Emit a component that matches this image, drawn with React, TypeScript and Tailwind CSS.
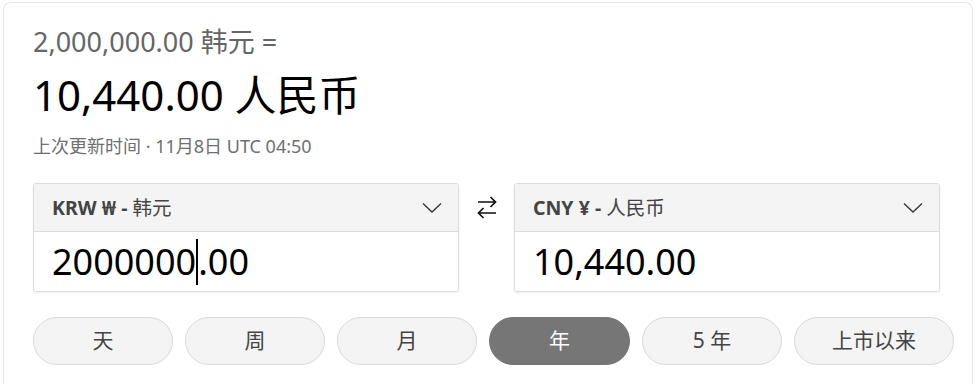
import React from "react";

const font = { fontFamily: '"Segoe UI", "Noto Sans", "Noto Sans CJK SC", sans-serif' };

function Chevron() {
  return (
    <svg width="20" height="12" viewBox="0 0 20 12" fill="none" className="shrink-0">
      <path d="M1 1.5 L10 10 L19 1.5" stroke="#333" strokeWidth="1.3" />
    </svg>
  );
}

function SwapIcon() {
  return (
    <svg width="20" height="23" viewBox="0 0 20 23" fill="none">
      <path d="M1 6 H18.5 M13.5 1 L18.5 6 L13.5 11" stroke="#111" strokeWidth="1.7" />
      <path d="M19 17 H1.5 M6.5 12 L1.5 17 L6.5 22" stroke="#111" strokeWidth="1.7" />
    </svg>
  );
}

function CurrencyBox({
  code,
  name,
  value,
  caretAt,
}: {
  code: string;
  name: string;
  value: string;
  caretAt?: number;
}) {
  return (
    <div className="flex flex-col rounded-[3px] border border-[#dcdcdc] shadow-[0_1px_2px_rgba(0,0,0,0.08)] overflow-hidden">
      <div className="flex h-[48px] items-center justify-between bg-[#f4f4f4] border-b border-[#dcdcdc] pl-[18px] pr-[16px]">
        <div className="text-[19.5px] text-[#444] whitespace-nowrap">
          <span className="font-bold">{code} -</span> <span>{name}</span>
        </div>
        <Chevron />
      </div>
      <div className="flex h-[59px] items-center bg-white pl-[18px] text-[36px] leading-none text-black">
        {caretAt !== undefined ? (
          <>
            <span>{value.slice(0, caretAt)}</span>
            <span className="inline-block h-[46px] w-[2px] bg-black" />
            <span>{value.slice(caretAt)}</span>
          </>
        ) : (
          <span>{value}</span>
        )}
      </div>
    </div>
  );
}

export default function App() {
  const pills = ["天", "周", "月", "年", "5 年", "上市以来"];
  return (
    <div className="h-[384px] w-[979px] bg-white overflow-hidden" style={font}>
      <div className="ml-[3px] mt-[2px] w-[970px] h-[382px] rounded-t-[8px] border border-b-0 border-[#e6e6e6] pl-[29px] pr-[32px] pt-[21px]">
        <div className="text-[27px] leading-[36px] text-[#666]">2,000,000.00 韩元 =</div>
        <div className="mt-[9px] text-[42px] leading-[52px] text-black">10,440.00 人民币</div>
        <div className="mt-[14px] text-[18px] leading-[22px] text-[#6f6f6f]">上次更新时间 · 11月8日 UTC 04:50</div>
        <div className="mt-[26px] grid grid-cols-[1fr_55px_1fr]">
          <CurrencyBox code="KRW ₩" name="韩元" value="2000000.00" caretAt={7} />
          <div className="flex h-[48px] items-center justify-center">
            <SwapIcon />
          </div>
          <CurrencyBox code="CNY ¥" name="人民币" value="10,440.00" />
        </div>
        <div className="mt-[25px] flex gap-[12px]">
          {pills.map((p, i) => (
            <div
              key={p}
              className={
                i === 3
                  ? "flex h-[48px] min-w-[141px] shrink-0 whitespace-nowrap items-center justify-center rounded-full border border-[#767676] bg-[#767676] px-[37px] text-[21px] text-white"
                  : "flex h-[48px] min-w-[140px] shrink-0 whitespace-nowrap items-center justify-center rounded-full border border-[#d9d9d9] bg-[#f4f4f4] px-[37px] text-[21px] text-[#444]"
              }
            >
              {p}
            </div>
          ))}
        </div>
      </div>
    </div>
  );
}
